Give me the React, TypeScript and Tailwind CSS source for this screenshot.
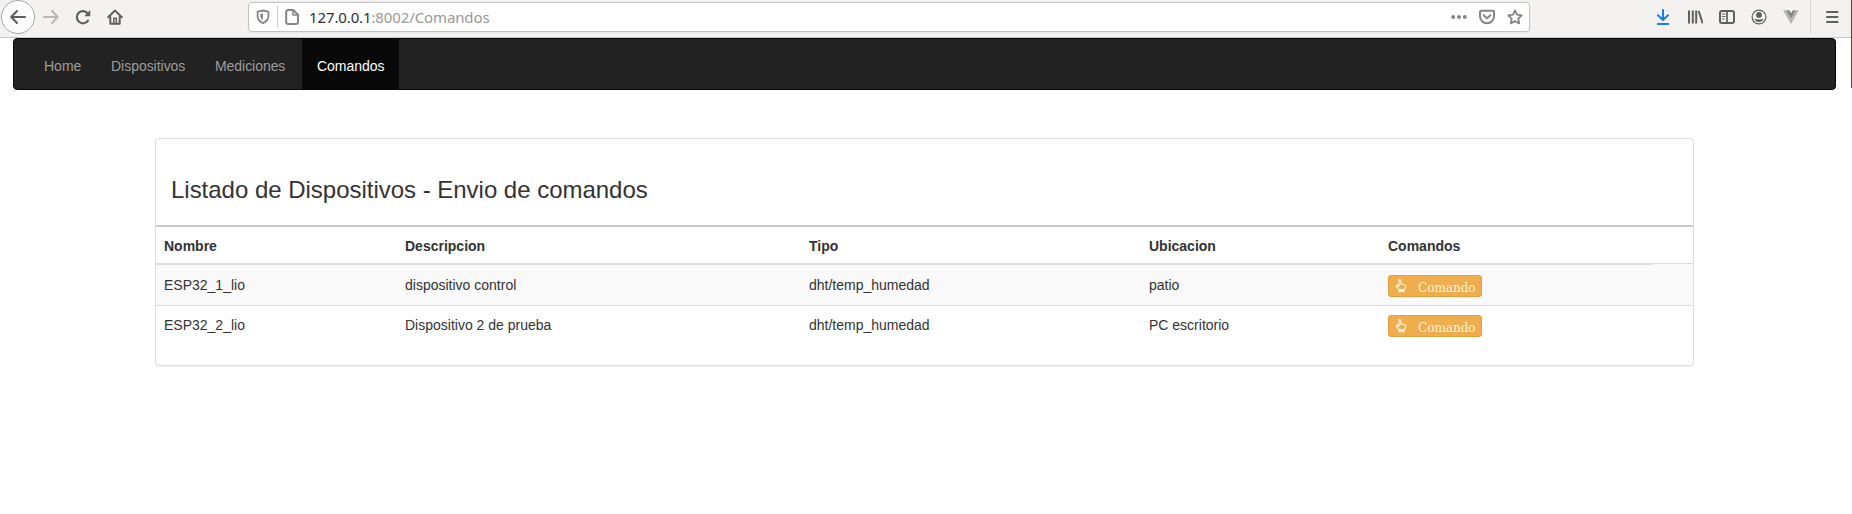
import type { ReactNode } from "react";

const devices = [
  { nombre: "ESP32_1_lio", descripcion: "dispositivo control", tipo: "dht/temp_humedad", ubicacion: "patio" },
  { nombre: "ESP32_2_lio", descripcion: "Dispositivo 2 de prueba", tipo: "dht/temp_humedad", ubicacion: "PC escritorio" },
];

function Icon({ className = "", children }: { className?: string; children: ReactNode }) {
  return (
    <svg
      viewBox="0 0 16 16"
      className={`h-4 w-4 shrink-0 ${className}`}
      fill="none"
      stroke="currentColor"
      strokeWidth="2"
      strokeLinecap="round"
      strokeLinejoin="round"
    >
      {children}
    </svg>
  );
}

function HandUp() {
  return (
    <svg viewBox="0 0 12 14" className="mt-[3px] h-[14px] w-3 shrink-0" fill="none" stroke="#fff8e0" strokeWidth="1.1" strokeLinejoin="round">
      <path d="M4 7.500V1.800c0-1.200 1.800-1.200 1.800 0v3.100l3.700.8c.9.2 1.300.7 1.200 1.500l-.4 2-1.100 1.400H4L1.200 7.400C.7 6.500 1.500 5.900 2.200 6.300L4 7.500" />
      <path d="M3.500 12.200h6" stroke="#fff" strokeWidth="2" />
    </svg>
  );
}

function AddressBar() {
  return (
    <div className="ml-[125px] flex h-[30px] w-[1282px] items-center rounded-[4px] border border-[#c3c3c3] bg-white pl-[6px] pr-[6px] text-[#858585] shadow-[0_1px_2px_rgba(0,0,0,0.06)]">
      <Icon>
        <path d="M2.600 2.600 8 1.500l5.400 1.100v4.300c0 3.400-2.300 5.700-5.400 7.200-3.100-1.500-5.400-3.800-5.400-7.200z" strokeWidth="1.800" />
        <path d="M8 4.500v6.700C6.200 10 5.300 8.500 5.300 6.800V5z" fill="currentColor" stroke="none" />
      </Icon>
      <span className="ml-[6px] h-[22px] w-px bg-[#cfcfcf]" />
      <Icon className="ml-[6px]">
        <path d="M4 1h5.300L14 5.700v7.500a1.800 1.800 0 0 1-1.800 1.800H4a1.800 1.800 0 0 1-1.800-1.800V2.800A1.800 1.800 0 0 1 4 1z" />
        <path d="M9 1.500V6h4.500" strokeWidth="1.500" />
      </Icon>
      <span className="ml-[9px] w-[400px] whitespace-nowrap font-['Noto_Sans','Open_Sans',sans-serif] text-[15px] leading-5 tracking-[-0.12px] text-[#999]">
        <span className="text-[#303030]">127.0.0.1</span>:8002/Comandos
      </span>
      <div className="ml-auto flex gap-3">
        <Icon>
          <g fill="currentColor" stroke="none">
            <circle cx="2.200" cy="8" r="2" />
            <circle cx="8" cy="8" r="2" />
            <circle cx="13.800" cy="8" r="2" />
          </g>
        </Icon>
        <Icon>
          <path d="M2 1.800h12a1 1 0 0 1 1 1v4.500a7 7 0 0 1-14 0V2.800a1 1 0 0 1 1-1z" />
          <path d="m4.700 6.200 3.300 3.200 3.300-3.200" />
        </Icon>
        <Icon>
          <path d="m8 1.400 2 4.300 4.700.6-3.400 3.300.9 4.800L8 12.100l-4.200 2.300.9-4.800L1.300 6.300 6 5.700z" strokeWidth="1.800" />
        </Icon>
      </div>
    </div>
  );
}

function Toolbar() {
  return (
    <header className="flex h-[38px] w-[1851px] items-start border-b border-[#c6c6c6] bg-[#f3f2f1] text-[#5f5f5f]">
      <div className="flex h-[34px] w-full items-center">
        <span className="ml-px flex h-[34px] w-[34px] shrink-0 items-center justify-center rounded-full border border-[#aaa] bg-[#fcfcfc]">
          <Icon>
            <path d="M15 8H1.500M7 2 1.200 8 7 14" />
          </Icon>
        </span>
        <Icon className="ml-2 text-[#b8b8b8]">
          <path d="M1 8h13.500M9 2l5.800 6L9 14" />
        </Icon>
        <Icon className="ml-4">
          <path d="M13 11.600A6.100 6.100 0 1 1 12.900 4.600" strokeWidth="2.200" />
          <path d="M15.300 1v6.200H9.200z" fill="currentColor" stroke="none" />
        </Icon>
        <Icon className="ml-4">
          <path d="M1.200 8.200 8 1.500l6.800 6.700" />
          <path d="M3.300 8v6.700h9.400V8" />
          <path d="M6.800 14V9.300h2.500V14" strokeWidth="1.500" />
        </Icon>
        <AddressBar />
        <Icon className="ml-[125px] text-[#1a7fe0]">
          <path d="M8 1v9.500M3 6.200l5 4.800 5-4.800M2.800 15h10.400" />
        </Icon>
        <Icon className="ml-4">
          <path d="M2 1.500v13M5.800 1.500v13M9.200 1.500v13M11.700 2 15.600 14.300" strokeLinecap="butt" />
        </Icon>
        <Icon className="ml-4">
          <rect x="1" y="2" width="14" height="12" rx="2" />
          <path d="M8 2v12" strokeWidth="1.700" />
          <path d="M3.500 5h2.500M3.500 7.500h2.500M3.500 10h1.500" strokeWidth="1.100" />
        </Icon>
        <Icon className="ml-4">
          <circle cx="8" cy="8" r="6.900" strokeWidth="1.200" />
          <circle cx="8" cy="5.900" r="2.900" fill="currentColor" stroke="none" />
          <path d="M3.500 9.500c1.400 1.300 7.600 1.300 9 0-.3 4.500-8.700 4.500-9 0z" fill="currentColor" stroke="none" />
        </Icon>
        <Icon className="ml-4">
          <path d="M0 1.200h3.200L8 9.500l4.800-8.300H16L8 15z" fill="#b6b6b6" stroke="none" />
          <path d="M3.200 1.200h3L8 4.300l1.800-3.100h3L8 9.700z" fill="#858585" stroke="none" />
        </Icon>
        <span className="ml-[11px] h-[34px] w-px bg-[#d6d6d6]" />
        <Icon className="ml-[13px]">
          <path d="M3 3h10.500M3 8h10.500M3 13h10.500" />
        </Icon>
      </div>
    </header>
  );
}

function Navbar() {
  return (
    <nav className="ml-[13px] flex h-[52px] w-[1823px] rounded-[4px] border border-[#080808] bg-[#222] pl-[15px] text-sm leading-5 text-[#9d9d9d]">
      <a className="w-[67px] px-[15px] py-[17px]">Home</a>
      <a className="w-[104px] px-[15px] py-[17px] tracking-[-0.03px]">Dispositivos</a>
      <a className="w-[102px] px-[15px] py-[17px] tracking-[-0.05px]">Mediciones</a>
      <a className="w-[97px] bg-[#080808] px-[15px] py-[17px] tracking-[-0.03px] text-white">Comandos</a>
    </nav>
  );
}

const columns = "grid grid-cols-[241px_404px_340px_239px_1fr]";

export default function App() {
  return (
    <div className="h-[514px] w-[1852px] overflow-hidden bg-white font-['Liberation_Sans',Arial,sans-serif] text-sm text-[#333]">
      <div className="flex h-[38px] justify-between">
        <Toolbar />
        <span className="h-[88px] w-px bg-[#4b4a45]" />
      </div>
      <Navbar />
      <main className="ml-[155px] mt-12 flex h-[228px] w-[1539px] flex-col rounded-[4px] border border-[#ddd] shadow-[0_1px_1px_rgba(0,0,0,0.05)]">
        <h3 className="h-[86px] pl-[15px] pt-[38px] text-2xl leading-[26px] tracking-[-0.02px]">Listado de Dispositivos - Envio de comandos</h3>
        <div className={`${columns} h-[38px] border-t-2 border-[#cacaca] pt-[9px] font-bold leading-5`}>
          {["Nombre", "Descripcion", "Tipo", "Ubicacion", "Comandos"].map((label) => (
            <span key={label} className="pl-2">{label}</span>
          ))}
        </div>
        <div className="flex h-[2px] items-start bg-[#f9f9f9]">
          <span className="h-[2px] w-[1497px] bg-[#ddd]" />
          <span className="h-px grow bg-[#ddd]" />
        </div>
        {devices.map((d, i) => (
          <div
            key={d.nombre}
            className={`${columns} leading-5 ${i === 0 ? "h-[41px] border-b border-[#ddd] bg-[#f9f9f9] pt-[10px]" : "h-10 pt-[9px]"}`}
          >
            <span className="pl-2">{d.nombre}</span>
            <span className="pl-2">{d.descripcion}</span>
            <span className="pl-2">{d.tipo}</span>
            <span className="pl-2">{d.ubicacion}</span>
            <span className="pl-2">
              <button className="flex h-[22px] w-[94px] items-start rounded-[3px] border border-[#e3a03f] bg-[#f0ad4e] pl-[6px] font-['DejaVu_Serif',serif] text-xs leading-[24px] text-[#fff3d6]">
                <HandUp />
                <span className="ml-[11px]">Comando</span>
              </button>
            </span>
          </div>
        ))}
      </main>
    </div>
  );
}
